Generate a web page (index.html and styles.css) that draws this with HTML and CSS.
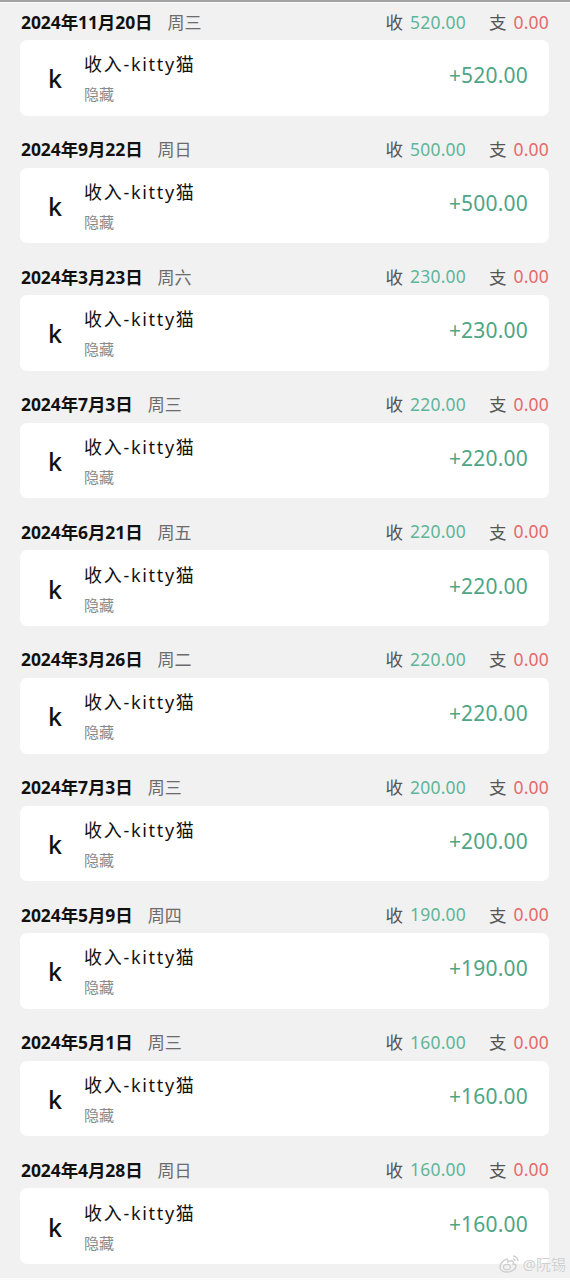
FILE: index.html
```html
<!DOCTYPE html>
<html lang="zh-CN">
<head>
<meta charset="utf-8">
<link rel="stylesheet" href="styles.css">
</head>
<body>
<div class="page">
  <div class="list">
    <section class="group">
      <div class="head"><span class="date">2024年11月20日</span><span class="week">周三</span><span class="sum"><span class="lbl">收</span><span class="inc">520.00</span><span class="lbl out-l">支</span><span class="exp">0.00</span></span></div>
      <div class="card"><span class="ava">k</span><div class="info"><div class="title">收入-kitty猫</div><div class="note">隐藏</div></div><span class="amt">+520.00</span></div>
    </section>
    <section class="group">
      <div class="head"><span class="date">2024年9月22日</span><span class="week">周日</span><span class="sum"><span class="lbl">收</span><span class="inc">500.00</span><span class="lbl out-l">支</span><span class="exp">0.00</span></span></div>
      <div class="card"><span class="ava">k</span><div class="info"><div class="title">收入-kitty猫</div><div class="note">隐藏</div></div><span class="amt">+500.00</span></div>
    </section>
    <section class="group">
      <div class="head"><span class="date">2024年3月23日</span><span class="week">周六</span><span class="sum"><span class="lbl">收</span><span class="inc">230.00</span><span class="lbl out-l">支</span><span class="exp">0.00</span></span></div>
      <div class="card"><span class="ava">k</span><div class="info"><div class="title">收入-kitty猫</div><div class="note">隐藏</div></div><span class="amt">+230.00</span></div>
    </section>
    <section class="group">
      <div class="head"><span class="date">2024年7月3日</span><span class="week">周三</span><span class="sum"><span class="lbl">收</span><span class="inc">220.00</span><span class="lbl out-l">支</span><span class="exp">0.00</span></span></div>
      <div class="card"><span class="ava">k</span><div class="info"><div class="title">收入-kitty猫</div><div class="note">隐藏</div></div><span class="amt">+220.00</span></div>
    </section>
    <section class="group">
      <div class="head"><span class="date">2024年6月21日</span><span class="week">周五</span><span class="sum"><span class="lbl">收</span><span class="inc">220.00</span><span class="lbl out-l">支</span><span class="exp">0.00</span></span></div>
      <div class="card"><span class="ava">k</span><div class="info"><div class="title">收入-kitty猫</div><div class="note">隐藏</div></div><span class="amt">+220.00</span></div>
    </section>
    <section class="group">
      <div class="head"><span class="date">2024年3月26日</span><span class="week">周二</span><span class="sum"><span class="lbl">收</span><span class="inc">220.00</span><span class="lbl out-l">支</span><span class="exp">0.00</span></span></div>
      <div class="card"><span class="ava">k</span><div class="info"><div class="title">收入-kitty猫</div><div class="note">隐藏</div></div><span class="amt">+220.00</span></div>
    </section>
    <section class="group">
      <div class="head"><span class="date">2024年7月3日</span><span class="week">周三</span><span class="sum"><span class="lbl">收</span><span class="inc">200.00</span><span class="lbl out-l">支</span><span class="exp">0.00</span></span></div>
      <div class="card"><span class="ava">k</span><div class="info"><div class="title">收入-kitty猫</div><div class="note">隐藏</div></div><span class="amt">+200.00</span></div>
    </section>
    <section class="group">
      <div class="head"><span class="date">2024年5月9日</span><span class="week">周四</span><span class="sum"><span class="lbl">收</span><span class="inc">190.00</span><span class="lbl out-l">支</span><span class="exp">0.00</span></span></div>
      <div class="card"><span class="ava">k</span><div class="info"><div class="title">收入-kitty猫</div><div class="note">隐藏</div></div><span class="amt">+190.00</span></div>
    </section>
    <section class="group">
      <div class="head"><span class="date">2024年5月1日</span><span class="week">周三</span><span class="sum"><span class="lbl">收</span><span class="inc">160.00</span><span class="lbl out-l">支</span><span class="exp">0.00</span></span></div>
      <div class="card"><span class="ava">k</span><div class="info"><div class="title">收入-kitty猫</div><div class="note">隐藏</div></div><span class="amt">+160.00</span></div>
    </section>
    <section class="group">
      <div class="head"><span class="date">2024年4月28日</span><span class="week">周日</span><span class="sum"><span class="lbl">收</span><span class="inc">160.00</span><span class="lbl out-l">支</span><span class="exp">0.00</span></span></div>
      <div class="card"><span class="ava">k</span><div class="info"><div class="title">收入-kitty猫</div><div class="note">隐藏</div></div><span class="amt">+160.00</span></div>
    </section>
  </div>
  <div class="bottom"></div>
  <div class="mark">
    <svg width="22" height="20" viewBox="0 0 22 20" aria-hidden="true"><path d="M9 5c-4 1-7 5-7 8 0 3 3 5 7 5 5 0 9-3 9-6 0-2-2-2-3-2 1-2 0-4-3-3-1 0-2 1-2 1 0-2-1-3-1-3z" fill="none" stroke="#cfcfcf" stroke-width="1.4"/><ellipse cx="9" cy="13" rx="3.5" ry="2.6" fill="none" stroke="#cfcfcf" stroke-width="1.2"/><path d="M15 2a5 5 0 0 1 5 5M15 5a2 2 0 0 1 2 2" fill="none" stroke="#cfcfcf" stroke-width="1.3"/></svg>
    <span>@阮锡</span>
  </div>
</div>
</body>
</html>
```

FILE: styles.css
```css
* { box-sizing: border-box; margin: 0; padding: 0; }
html, body { background: #f1f1f1; }
body {
  width: 570px;
  font-family: "Noto Sans", "Noto Sans CJK SC", sans-serif;
}
.page {
  position: relative;
  height: 1280px;
  display: flex;
  flex-direction: column;
  border-top: 2px solid #a3a3a3;
}
.list {
  display: flex;
  flex-direction: column;
  padding: 0 21px 0 20px;
}
.group {
  height: 127.6px;
  display: flex;
  flex-direction: column;
}
.head {
  height: 38px;
  display: flex;
  align-items: center;
  border-top: 1px solid #fafafa;
  margin: 0 -21px 0 -20px;
  padding: 0 21px 0 21px;
}
.group + .group .head { border-top: none; }
.date {
  font-weight: 700;
  font-size: 17.5px;
  color: #111;
  letter-spacing: -0.1px;
}
.week {
  margin-left: 15px;
  font-size: 17px;
  color: #6b6b6b;
}
.sum {
  margin-left: auto;
  display: flex;
  align-items: center;
  font-size: 17.5px;
}
.lbl { color: #555; margin-right: 7px; }
.out-l { margin-left: 23px; }
.inc { color: #5eb69a; letter-spacing: 0.2px; }
.exp { color: #e46a6a; letter-spacing: 0.2px; }
.card {
  height: 75.6px;
  background: #fff;
  border-radius: 7px;
  display: flex;
  align-items: center;
  padding: 0 21px 0 28px;
}
.ava {
  width: 36px;
  font-size: 25px;
  font-weight: 500;
  color: #111;
  margin-top: 1px;
}
.info {
  display: flex;
  flex-direction: column;
  gap: 9px;
}
.title {
  font-size: 18px;
  color: #111;
  line-height: 24px;
  letter-spacing: 1.7px;
}
.note {
  font-size: 15px;
  color: #8a8a8a;
  line-height: 18px;
}
.amt {
  margin-left: auto;
  margin-bottom: 5px;
  font-size: 21px;
  color: #4fa584;
  letter-spacing: 0.2px;
}
.bottom {
  margin-top: auto;
  height: 5px;
  border-top: 2px solid #fbfbfb;
  border-bottom: 3px solid #a5a5a5;
}
.mark {
  position: absolute;
  right: 4px;
  bottom: 6px;
  display: flex;
  align-items: center;
  gap: 3px;
  font-size: 15px;
  color: #d0d0d0;
  text-shadow: 0 0 1px #fff;
}
```
